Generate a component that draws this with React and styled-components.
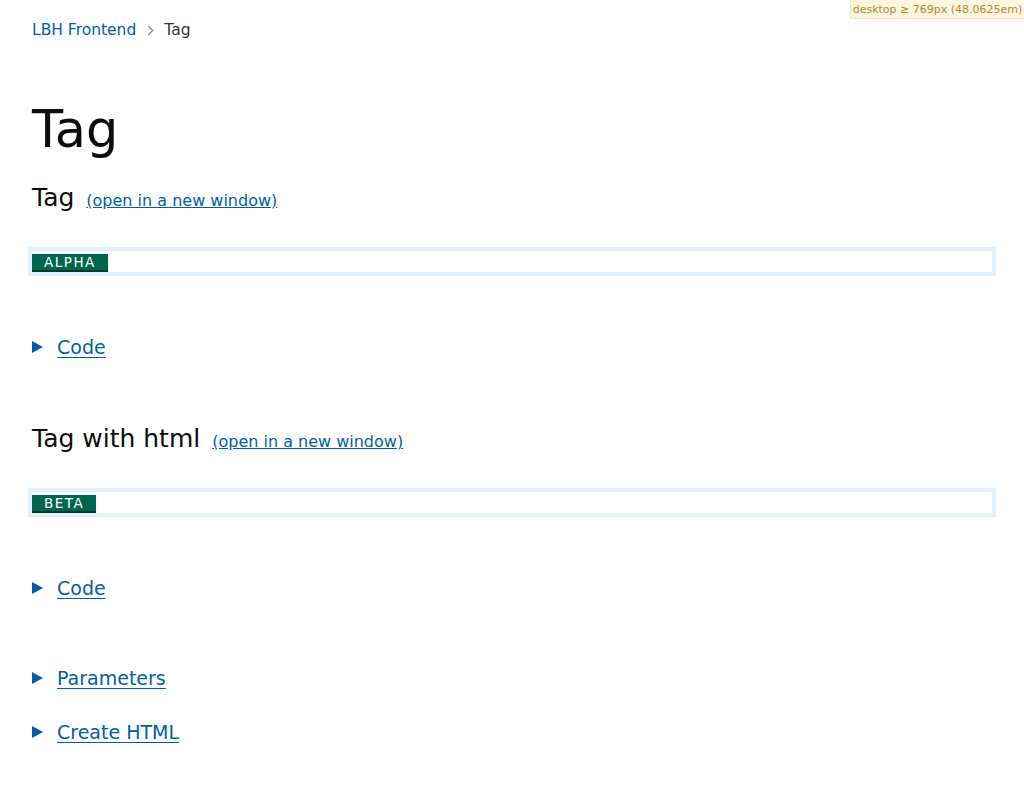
import React from 'react'
import styled, { createGlobalStyle } from 'styled-components'

const GlobalStyle = createGlobalStyle`
  body {
    margin: 0;
    background: #fff;
    color: #0b0c0c;
    font-family: "DejaVu Sans", "Noto Sans", sans-serif;
  }
`

const Page = styled.div`
  position: relative;
  padding: 20px 28px 60px 28px;
`

const MediaBadge = styled.div`
  position: absolute;
  top: 0;
  right: 0;
  width: 174px;
  height: 19px;
  box-sizing: border-box;
  background: #fcf6e1;
  border-left: 1px solid #f3e6bd;
  border-bottom: 1px solid #f3e6bd;
  color: #b8892f;
  font-size: 11px;
  line-height: 19px;
  text-align: center;
`

const Breadcrumbs = styled.nav`
  display: flex;
  align-items: center;
  gap: 9px;
  padding-left: 4px;
  font-size: 15.5px;
  line-height: 20px;
`

const CrumbLink = styled.a`
  color: #025ea6;
  text-decoration: none;
`

const Chevron = styled.span`
  width: 6px;
  height: 6px;
  border-top: 1px solid #6f777b;
  border-right: 1px solid #6f777b;
  transform: rotate(45deg);
  margin-right: 3px;
`

const Current = styled.span`
  color: #333;
`

const Title = styled.h1`
  margin: 62px 0 0 4px;
  font-size: 51px;
  font-weight: 400;
  line-height: 56px;
`

const Section = styled.section`
  margin-top: ${p => p.$gap}px;
`

const ExampleHeading = styled.h2`
  display: flex;
  align-items: baseline;
  gap: 12px;
  margin: 0 0 0 4px;
  font-size: 25px;
  font-weight: 400;
  line-height: 30px;
`

const NewWindow = styled.a`
  color: #025ea6;
  font-size: 16px;
  text-decoration: underline;
`

const Frame = styled.div`
  margin-top: 31px;
  height: 20px;
  border: 4px solid #e2effc;
  padding-top: 1px;
`

const Tag = styled.strong`
  display: inline-block;
  padding: 1px 12px 0;
  background: #00664f;
  border-bottom: 2px solid #00392c;
  color: #fff;
  font-size: 13.5px;
  font-weight: 400;
  letter-spacing: 1.5px;
  line-height: 15px;
  text-transform: uppercase;
`

const Disclosure = styled.div`
  display: flex;
  align-items: center;
  gap: 14px;
  margin: ${p => p.$gap}px 0 0 4px;
  line-height: 24px;
`

const Triangle = styled.span`
  width: 0;
  height: 0;
  border-top: 6px solid transparent;
  border-bottom: 6px solid transparent;
  border-left: 11px solid #025ea6;
`

const SummaryLink = styled.a`
  color: #025ea6;
  font-size: 19px;
  text-decoration: underline;
  text-underline-offset: 3px;
`

const examples = [
  { name: 'Tag', tag: 'Alpha', gap: 25 },
  { name: 'Tag with html', tag: 'Beta', gap: 65 }
]

export default function App () {
  return (
    <Page>
      <GlobalStyle />
      <MediaBadge>desktop ≥ 769px (48.0625em)</MediaBadge>
      <Breadcrumbs>
        <CrumbLink href="#">LBH Frontend</CrumbLink>
        <Chevron />
        <Current>Tag</Current>
      </Breadcrumbs>
      <Title>Tag</Title>
      {examples.map(example => (
        <Section key={example.name} $gap={example.gap}>
          <ExampleHeading>
            {example.name}
            <NewWindow href="#">(open in a new window)</NewWindow>
          </ExampleHeading>
          <Frame>
            <Tag>{example.tag}</Tag>
          </Frame>
          <Disclosure $gap={59}>
            <Triangle />
            <SummaryLink href="#">Code</SummaryLink>
          </Disclosure>
        </Section>
      ))}
      <Disclosure $gap={66}>
        <Triangle />
        <SummaryLink href="#">Parameters</SummaryLink>
      </Disclosure>
      <Disclosure $gap={30}>
        <Triangle />
        <SummaryLink href="#">Create HTML</SummaryLink>
      </Disclosure>
    </Page>
  )
}
